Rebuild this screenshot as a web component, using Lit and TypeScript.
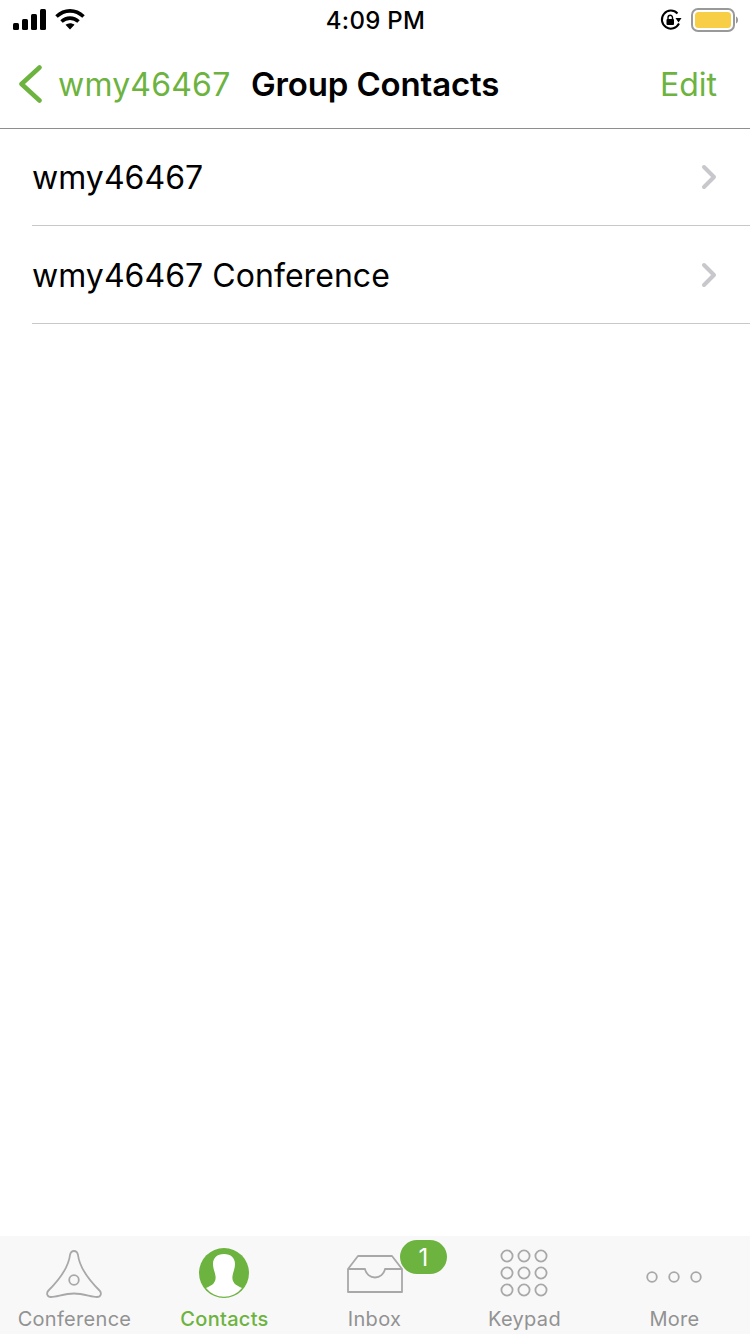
import { LitElement, html, css, svg } from 'lit';
import { customElement } from 'lit/decorators.js';

const GREEN = css`#6db33f`;

const tabs = [
  {
    label: 'Conference',
    icon: svg`<path d="M28 5c-2.500 0-3.500 1.500-4 4C22.500 21 14 33 2.500 44.500c-2.500 2.500-1.500 6.500 2.500 6.500 6 0 13-3.500 23-3.500s17 3.500 23 3.500c4 0 5-4 2.500-6.500C42 33 33.500 21 32 9c-.5-2.500-1.500-4-4-4z" fill="none" stroke="#a8a8a8" stroke-width="1.800"/><circle cx="28" cy="34" r="4.800" fill="none" stroke="#a8a8a8" stroke-width="1.800"/>`,
  },
  {
    label: 'Contacts',
    active: true,
    icon: svg`<circle cx="28" cy="27" r="25" fill="#6db33f"/><path d="M28 8c-7 0-11 4-11 10 0 5 2 8 2.500 12 .4 3-.3 5.500-2 7.500-1.500 1.500-4.500 3-7.500 4.500A23 23 0 0 0 46 42c-3-1.500-6-3-7.500-4.500-1.700-2-2.400-4.500-2-7.500.5-4 2.500-7 2.500-12 0-6-4-10-11-10z" fill="#fff"/>`,
  },
  {
    label: 'Inbox',
    icon: svg`<path transform="translate(1 0)" d="M1 23 11 10h34l10 13M1 23V46h54V23H38c-1 5-5 8.500-10 8.500S19 28 18 23z" fill="none" stroke="#a8a8a8" stroke-width="1.800" stroke-linejoin="round"/>`,
  },
  {
    label: 'Keypad',
    icon: svg`${[10, 27, 44].flatMap((cy) =>
      [11, 28, 45].map(
        (cx) => svg`<circle cx="${cx}" cy="${cy}" r="5.600" fill="none" stroke="#a8a8a8" stroke-width="1.800"/>`
      )
    )}`,
  },
  {
    label: 'More',
    icon: svg`${[6, 28, 50].map(
      (cx) => svg`<circle cx="${cx}" cy="31" r="4.800" fill="none" stroke="#a8a8a8" stroke-width="1.800"/>`
    )}`,
  },
];

const rows = ['wmy46467', 'wmy46467 Conference'];

@customElement('app-root')
export class AppRoot extends LitElement {
  static styles = css`
    :host {
      display: flex;
      flex-direction: column;
      height: 1334px;
      background: #fff;
      font-family: Inter, 'Liberation Sans', sans-serif;
      overflow: hidden;
    }

    .status {
      height: 40px;
      display: grid;
      grid-template-columns: 1fr auto 1fr;
      align-items: center;
      padding: 0 12px 0 13px;
      box-sizing: border-box;
    }

    .status-left {
      display: flex;
      align-items: center;
      gap: 8px;
    }

    .status-right {
      display: flex;
      align-items: center;
      justify-content: flex-end;
      gap: 9px;
    }

    .time {
      font-size: 24px;
      font-weight: 500;
      color: #000;
      letter-spacing: 0.3px;
    }

    .nav {
      height: 88px;
      display: flex;
      align-items: center;
      padding: 0 33px 0 18px;
      border-bottom: 1px solid #8e8e8e;
      font-size: 32px;
      color: ${GREEN};
    }

    .back {
      display: flex;
      align-items: center;
      gap: 15px;
      width: 233px;
      letter-spacing: 0.2px;
    }

    .nav-title {
      flex: 1;
      color: #000;
      font-size: 33px;
      font-weight: 600;
      letter-spacing: -0.15px;
    }

    .list {
      flex: 1;
      margin-top: -1px;
    }

    .row {
      height: 97px;
      margin-left: 32px;
      padding-right: 33px;
      display: flex;
      align-items: center;
      justify-content: space-between;
      border-bottom: 1px solid #c8c8c8;
      font-size: 32px;
      letter-spacing: 0.05px;
      color: #000;
    }

    .row span {
      padding-top: 2px;
    }

    .tabbar {
      height: 98px;
      background: #f8f8f8;
      display: grid;
      grid-template-columns: repeat(5, 150px);
    }

    .tab {
      position: relative;
      display: flex;
      flex-direction: column;
      align-items: center;
      padding: 10px 1px 0 0;
      font-size: 20px;
      color: #929292;
      letter-spacing: 0.3px;
    }

    .tab.active {
      color: ${GREEN};
      font-weight: 500;
    }

    .tab svg {
      display: block;
      width: 56px;
      height: 56px;
      margin: 0 1px 5px 0;
      overflow: visible;
    }

    .badge {
      position: absolute;
      top: 4px;
      left: 100px;
      width: 47px;
      height: 34px;
      border-radius: 17px;
      background: ${GREEN};
      color: #fff;
      font-size: 24px;
      font-weight: 400;
      display: flex;
      align-items: center;
      justify-content: center;
      letter-spacing: 0;
    }
  `;

  render() {
    return html`
      <div class="status">
        <div class="status-left">
          <svg width="34" height="22" viewBox="0 0 34 22">
            <rect x="0" y="14" width="6" height="7" rx="1.500" />
            <rect x="9" y="10" width="6" height="11" rx="1.500" />
            <rect x="18" y="5" width="6" height="16" rx="1.500" />
            <rect x="27" y="0" width="6" height="21" rx="1.500" />
          </svg>
          <svg width="30" height="22" viewBox="0 0 30 22" fill="none" stroke="#000" stroke-width="3.600">
            <path d="M1.500 7.500c8-7.500 19-7.500 27 0" />
            <path d="M6.500 12.500c5-4.500 12-4.500 17 0" />
            <path d="M15 20.500 10.500 15.800c2.800-2 6.200-2 9 0z" fill="#000" stroke="none" />
          </svg>
        </div>
        <div class="time">4:09 PM</div>
        <div class="status-right">
          <svg width="22" height="22" viewBox="0 0 22 22">
            <path d="M19 14.500A9 9 0 1 1 17.500 4.500" fill="none" stroke="#000" stroke-width="2" />
            <path d="M15.500 9h6l-3 4.500z" fill="#000" />
            <rect x="6.500" y="10" width="7.500" height="6" rx="1" fill="#000" />
            <path d="M8 10.500V8.500a2.250 2.250 0 0 1 4.500 0v2" fill="none" stroke="#000" stroke-width="1.400" />
          </svg>
          <svg width="47" height="24" viewBox="0 0 47 24">
            <rect x="1" y="1" width="42" height="22" rx="6" fill="none" stroke="#999" stroke-width="2" />
            <rect x="4" y="4" width="36" height="16" rx="3.500" fill="#f8ce46" />
            <path d="M45 8.500c1.200.3 2 1.700 2 3.500s-.8 3.200-2 3.500z" fill="#999" />
          </svg>
        </div>
      </div>

      <div class="nav">
        <div class="back">
          <svg width="25" height="38" viewBox="0 0 25 38" fill="none" stroke="#6db33f" stroke-width="4.500" stroke-linecap="round" stroke-linejoin="round">
            <path d="M21.500 2.500 3.500 19l18 16.500" />
          </svg>
          <span>wmy46467</span>
        </div>
        <div class="nav-title">Group Contacts</div>
        <div>Edit</div>
      </div>

      <div class="list">
        ${rows.map(
          (r) => html`
            <div class="row">
              <span>${r}</span>
              <svg width="16" height="26" viewBox="0 0 16 26" fill="none" stroke="#c7c7cc" stroke-width="4" stroke-linecap="round" stroke-linejoin="round">
                <path d="M3 3 13 13 3 23" />
              </svg>
            </div>
          `
        )}
      </div>

      <div class="tabbar">
        ${tabs.map(
          (t) => html`
            <div class="tab ${t.active ? 'active' : ''}">
              <svg viewBox="0 0 56 56">${t.icon}</svg>
              ${t.label === 'Inbox' ? html`<div class="badge">1</div>` : ''}
              <span>${t.label}</span>
            </div>
          `
        )}
      </div>
    `;
  }
}
